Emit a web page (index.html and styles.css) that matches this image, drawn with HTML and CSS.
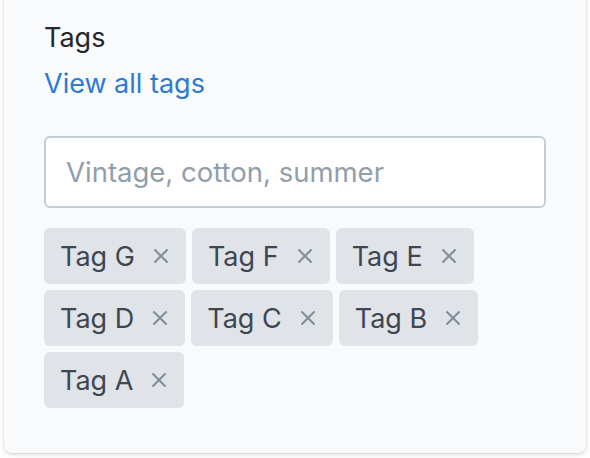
FILE: index.html
```html
<!DOCTYPE html>
<html lang="en">
<head>
<meta charset="utf-8">
<title>Tags</title>
<link rel="stylesheet" href="styles.css">
</head>
<body>
<section class="card">
  <h2 class="title">Tags</h2>
  <a class="link" href="#">View all tags</a>
  <input class="field" type="text" placeholder="Vintage, cotton, summer">
  <ul class="tags">
    <li class="tag"><span>Tag G</span><button class="remove" aria-label="Remove Tag G"><svg viewBox="0 0 16 16"><path d="M1.5 1.5L14.5 14.5M14.5 1.5L1.5 14.5"/></svg></button></li>
    <li class="tag"><span>Tag F</span><button class="remove" aria-label="Remove Tag F"><svg viewBox="0 0 16 16"><path d="M1.5 1.5L14.5 14.5M14.5 1.5L1.5 14.5"/></svg></button></li>
    <li class="tag"><span>Tag E</span><button class="remove" aria-label="Remove Tag E"><svg viewBox="0 0 16 16"><path d="M1.5 1.5L14.5 14.5M14.5 1.5L1.5 14.5"/></svg></button></li>
    <li class="tag"><span>Tag D</span><button class="remove" aria-label="Remove Tag D"><svg viewBox="0 0 16 16"><path d="M1.5 1.5L14.5 14.5M14.5 1.5L1.5 14.5"/></svg></button></li>
    <li class="tag"><span>Tag C</span><button class="remove" aria-label="Remove Tag C"><svg viewBox="0 0 16 16"><path d="M1.5 1.5L14.5 14.5M14.5 1.5L1.5 14.5"/></svg></button></li>
    <li class="tag"><span>Tag B</span><button class="remove" aria-label="Remove Tag B"><svg viewBox="0 0 16 16"><path d="M1.5 1.5L14.5 14.5M14.5 1.5L1.5 14.5"/></svg></button></li>
    <li class="tag"><span>Tag A</span><button class="remove" aria-label="Remove Tag A"><svg viewBox="0 0 16 16"><path d="M1.5 1.5L14.5 14.5M14.5 1.5L1.5 14.5"/></svg></button></li>
  </ul>
</section>
</body>
</html>
```

FILE: styles.css
```css
html, body {
  margin: 0;
  padding: 0;
  background: #ffffff;
}
body {
  font-family: Inter, "Noto Sans", sans-serif;
  width: 590px;
  height: 458px;
  overflow: hidden;
}
.card {
  box-sizing: border-box;
  margin: -20px 4px 0 4px;
  width: 582px;
  height: 473px;
  background: #f9fafb;
  border-radius: 8px;
  box-shadow: 0 0 0 1px rgba(63, 63, 68, 0.06), 0 2px 4px rgba(63, 63, 68, 0.16);
  padding: 40px 40px 0 40px;
  display: flex;
  flex-direction: column;
  align-items: flex-start;
}
.title {
  margin: 0;
  font-size: 27px;
  line-height: 36px;
  font-weight: 400;
  color: #24272b;
}
.link {
  margin-top: 10px;
  font-size: 27px;
  line-height: 36px;
  color: #2c7bd0;
  text-decoration: none;
}
.field {
  box-sizing: border-box;
  margin-top: 34px;
  width: 502px;
  height: 72px;
  border: 2px solid #c4cdd5;
  border-radius: 6px;
  background: #ffffff;
  padding: 0 20px;
  font-family: inherit;
  font-size: 27.5px;
  color: #212326;
  outline: none;
}
.field::placeholder {
  color: #919eab;
}
.tags {
  list-style: none;
  margin: 20px 0 0 0;
  padding: 0;
  width: 502px;
  display: flex;
  flex-wrap: wrap;
  gap: 6px;
}
.tag {
  box-sizing: border-box;
  height: 56px;
  display: flex;
  align-items: center;
  gap: 18px;
  padding: 0 17px 0 16px;
  background: #e0e3e7;
  border-radius: 6px;
  color: #3e4651;
  font-size: 27px;
}
.remove {
  display: flex;
  align-items: center;
  justify-content: center;
  width: 16px;
  height: 16px;
  padding: 0;
  border: 0;
  background: none;
}
.remove svg {
  width: 16px;
  height: 16px;
  fill: none;
  stroke: #7f8c99;
  stroke-width: 2;
}
```
